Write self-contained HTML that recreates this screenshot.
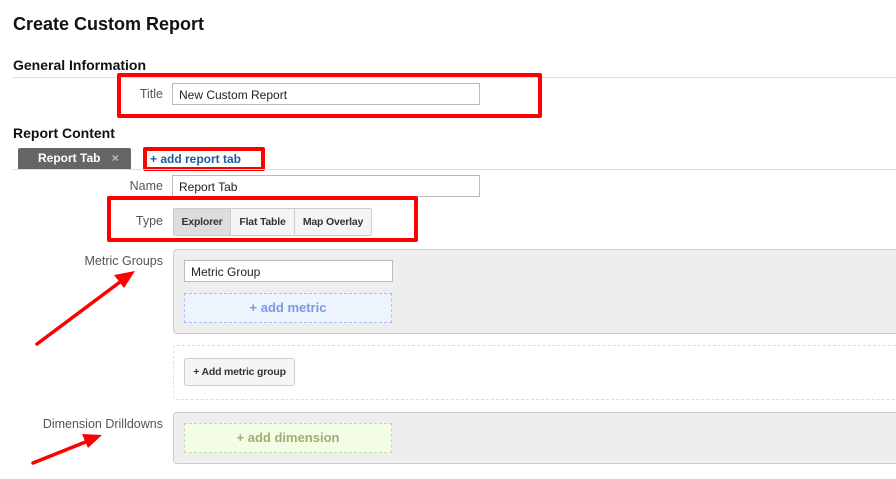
<!DOCTYPE html>
<html><head><style>
body{margin:0;width:896px;height:479px;background:#fff;font-family:"Liberation Sans",sans-serif;position:relative;overflow:hidden}
div,span{position:absolute;box-sizing:border-box}
.h{font-weight:bold;color:#111}
.lbl{color:#555;font-size:12.5px;text-align:right;width:150px}
.inp{border:1px solid #bbb;background:#fff;font-size:12px;color:#222;padding:4px 6px;height:22px}
.red{border:4px solid #f00;border-radius:2px}
.btn{border:1px solid #ccc;background:#f5f5f5;font-size:10.5px;font-weight:bold;color:#333;text-align:center;line-height:26px;letter-spacing:-0.2px}
</style></head><body>
<div class="h" style="left:13px;top:14px;font-size:18px">Create Custom Report</div>
<div class="h" style="left:13px;top:57px;font-size:14px">General Information</div>
<div style="left:13px;top:77px;width:883px;height:1px;background:#ddd"></div>
<div class="lbl" style="left:13px;top:87px;width:150px">Title</div>
<div class="inp" style="left:172px;top:83px;width:308px">New Custom Report</div>
<div class="red" style="left:117px;top:73px;width:425px;height:45px"></div>
<div class="h" style="left:13px;top:125px;font-size:14px">Report Content</div>
<div style="left:18px;top:148px;width:113px;height:21px;background:#666;border-radius:2px 2px 0 0;color:#fff;font-size:12px;font-weight:bold;line-height:21px;padding-left:20px">Report Tab <span style="position:static;color:#bbb;margin-left:8px">×</span></div>
<div style="left:150px;top:152px;font-size:12px;font-weight:bold;color:#1a5c9e">+ add report tab</div>
<div class="red" style="left:143px;top:147px;width:122px;height:24px"></div>
<div style="left:13px;top:169px;width:883px;height:1px;background:#ddd"></div>
<div class="lbl" style="left:13px;top:179px">Name</div>
<div class="inp" style="left:172px;top:175px;width:308px">Report Tab</div>
<div class="lbl" style="left:13px;top:214px">Type</div>
<div class="btn" style="left:173px;top:208px;width:58px;height:28px;background:#ddd;border-radius:2px 0 0 2px">Explorer</div>
<div class="btn" style="left:230px;top:208px;width:65px;height:28px">Flat Table</div>
<div class="btn" style="left:294px;top:208px;width:78px;height:28px;border-radius:0 2px 2px 0">Map Overlay</div>
<div class="red" style="left:107px;top:196px;width:311px;height:46px"></div>
<div class="lbl" style="left:13px;top:254px">Metric Groups</div>
<div style="left:173px;top:249px;width:740px;height:85px;background:#eee;border:1px solid #ccc;border-radius:4px"></div>
<div class="inp" style="left:184px;top:260px;width:209px;background:#fff">Metric Group</div>
<div style="left:184px;top:293px;width:208px;height:30px;background:#eef4fe;border:1px dashed #a9bdf0;color:#7d97e2;font-weight:bold;font-size:13px;text-align:center;line-height:27px">+ add metric</div>
<div style="left:173px;top:345px;width:740px;height:55px;border:1px dashed #ddd;border-radius:4px"></div>
<div class="btn" style="left:184px;top:358px;width:111px;height:28px;border-radius:3px">+ Add metric group</div>
<div class="lbl" style="left:13px;top:417px">Dimension Drilldowns</div>
<div style="left:173px;top:412px;width:740px;height:52px;background:#eee;border:1px solid #ccc;border-radius:4px"></div>
<div style="left:184px;top:423px;width:208px;height:30px;background:#f3fde6;border:1px dashed #c3dba0;color:#9ab070;font-weight:bold;font-size:13px;text-align:center;line-height:27px">+ add dimension</div>
<svg style="position:absolute;left:0;top:0" width="896" height="479">
<line x1="37" y1="344" x2="120" y2="282" stroke="#f00" stroke-width="3.5" stroke-linecap="round"/>
<polygon points="135,271 114,275 124,288" fill="#f00"/>
<line x1="33" y1="463" x2="88" y2="441" stroke="#f00" stroke-width="3.5" stroke-linecap="round"/>
<polygon points="102,435 82,434 88,448" fill="#f00"/>
</svg>
</body></html>
